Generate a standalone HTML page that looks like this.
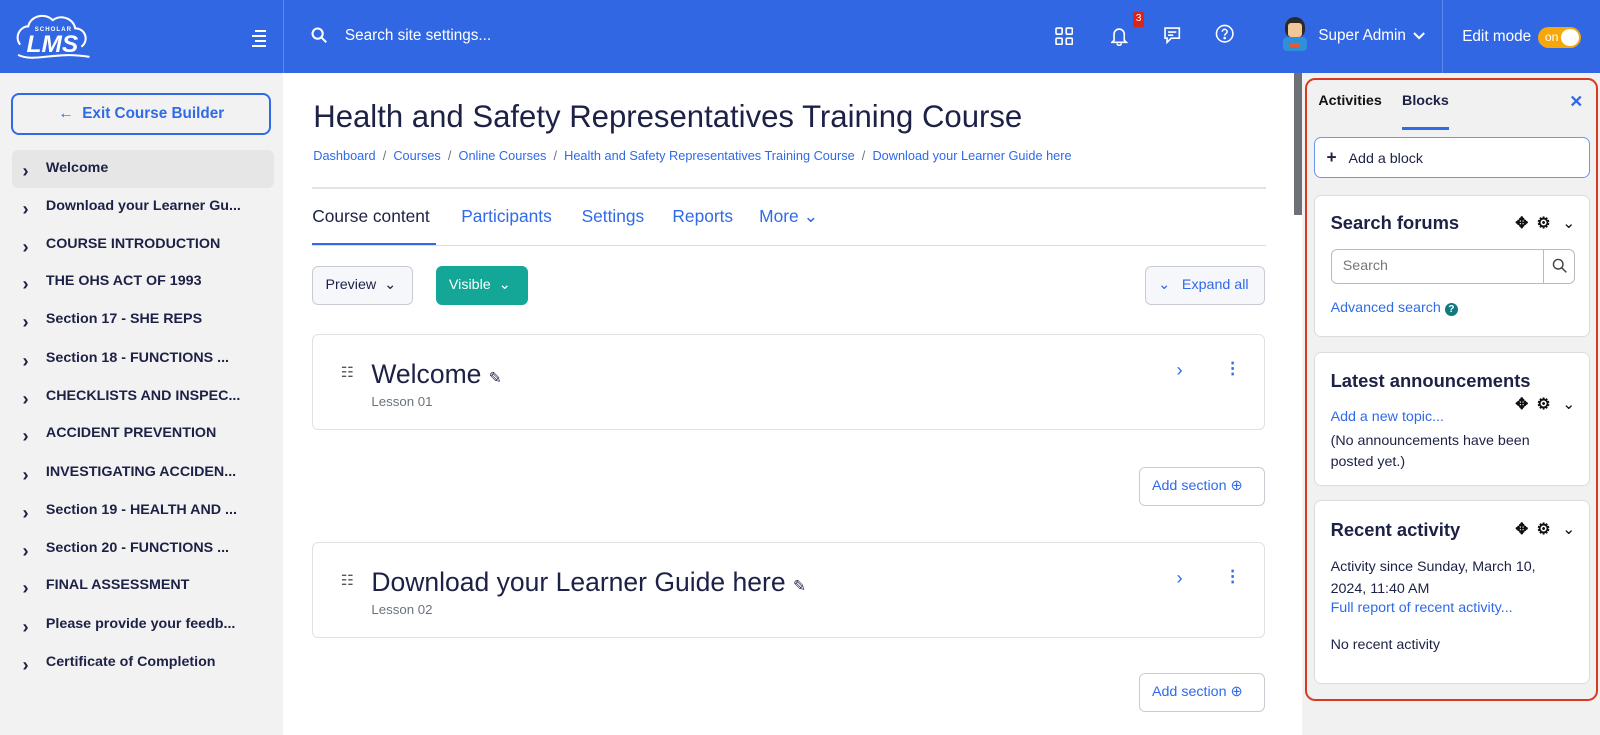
<!DOCTYPE html>
<html><head><meta charset="utf-8"><style>
*{box-sizing:border-box;margin:0;padding:0}
html,body{width:1600px;height:735px;overflow:hidden}
body{font-family:"Liberation Sans",sans-serif;background:#fff;color:#1d2145;position:relative}
#w{position:absolute;left:0;top:0;width:1568px;height:721px;zoom:1.0204}
.hdr{position:absolute;left:0;top:0;width:1568px;height:72px;background:#3167e3;color:#fff}
.vl{position:absolute;top:0;width:1px;height:72px;background:#5c87ec}
.side{position:absolute;left:0;top:72px;width:277px;height:663px;background:#f2f2f2}
.exit{position:absolute;left:11px;top:19px;width:255px;height:41px;border:2px solid #2f6ae8;border-radius:8px;color:#2f6ae8;font-weight:bold;font-size:15px;text-align:center;line-height:37px}
.it{position:absolute;left:12px;width:257px;height:37px;font-size:14px;font-weight:bold;line-height:37px;padding-left:33px;color:#1d2145}
.it:before{content:"›";position:absolute;left:10px;top:2px;font-size:18px;font-weight:bold}
.it.a{background:#e6e6e6;border-radius:6px}
.main{position:absolute;left:278px;top:72px;width:990px}
a,.lk{color:#2f6ae8;text-decoration:none}
.btn{position:absolute;border:1px solid #c8ccd2;border-radius:6px;background:#f5f7fa;font-size:14px;height:38px;line-height:36px;padding:0 12px}
.card{position:absolute;left:28px;width:934px;height:94px;border:1px solid #dee2e6;border-radius:6px;background:#fff}
.card h2{position:absolute;left:57px;top:24px;font-size:26px;font-weight:normal;color:#1d2145}
.card .ls{position:absolute;left:57px;top:58px;font-size:13px;color:#6a737d}
.drawer{position:absolute;left:1276px;top:72px;width:292px;height:663px;background:#f1f1f1}
.red{position:absolute;left:1279px;top:76px;width:287px;height:611px;border:2px solid #d9391f;border-radius:10px}
.blk{position:absolute;left:1288px;width:270px;background:#fff;border:1px solid #dcdcdc;border-radius:7px}
.blk h3{position:absolute;left:15px;font-size:18px;font-weight:bold;color:#1d2145}
.ic{position:absolute;left:196px;width:60px;height:16px;font-size:15px;font-weight:bold;color:#111}
.ic span{position:absolute;top:0}
.t{font-size:14px;position:absolute;left:15px}
</style></head><body><div id="w">
<div class="hdr">
 <div style="position:absolute;left:14px;top:10px;width:75px;height:52px">
  <svg width="75" height="52" viewBox="0 0 75 52"><path d="M6 34 C0 26 6 16 14 16 C16 6 30 2 38 10 C46 4 58 8 60 18 C70 18 74 30 66 36" fill="none" stroke="#fff" stroke-width="2"/><path d="M4 44 C20 52 40 40 74 46" fill="none" stroke="#fff" stroke-width="2"/></svg>
  <div style="position:absolute;left:20px;top:15px;font-size:6px;font-weight:bold;letter-spacing:1px">SCHOLAR</div>
  <div style="position:absolute;left:12px;top:20px;font-size:24px;font-weight:bold;font-style:italic">LMS</div>
 </div>
 <div style="position:absolute;left:247px;top:29px;width:14px"><div style="height:2px;background:#fff;margin:0 0 3px 3px"></div><div style="height:2px;background:#fff;margin:0 0 3px 0"></div><div style="height:2px;background:#fff;margin:0 0 3px 3px"></div><div style="height:2px;background:#fff;margin-left:0"></div></div>
 <div class="vl" style="left:277px"></div>
 <svg style="position:absolute;left:305px;top:26px" width="16" height="16" viewBox="0 0 16 16"><circle cx="6.5" cy="6.5" r="5" fill="none" stroke="#fff" stroke-width="2"/><path d="M10 10l5 5" stroke="#fff" stroke-width="2"/></svg>
 <div style="position:absolute;left:338px;top:26px;font-size:15px">Search site settings...</div>
 <svg style="position:absolute;left:1034px;top:26px" width="18" height="18" viewBox="0 0 18 18" fill="none" stroke="#fff" stroke-width="1.6"><rect x="1" y="1" width="6" height="6" rx="1"/><rect x="11" y="1" width="6" height="6" rx="1"/><rect x="1" y="11" width="6" height="6" rx="1"/><rect x="11" y="11" width="6" height="6" rx="1"/></svg>
 <svg style="position:absolute;left:1089px;top:25px" width="16" height="20" viewBox="0 0 16 20" fill="none" stroke="#fff" stroke-width="1.6"><path d="M3 14V8a5 5 0 0110 0v6l2 2H1z"/><path d="M6 17a2 2 0 004 0"/></svg>
 <div style="position:absolute;left:1110px;top:12px;background:#d9251d;font-size:10px;padding:0 3px;line-height:14px">3</div>
 <svg style="position:absolute;left:1140px;top:25px" width="18" height="18" viewBox="0 0 18 18" fill="none" stroke="#fff" stroke-width="1.6"><path d="M2 2h14v10H8l-4 4v-4H2z"/><path d="M5 6h8M5 9h5"/></svg>
 <svg style="position:absolute;left:1191px;top:24px" width="19" height="19" viewBox="0 0 20 20" fill="none" stroke="#fff" stroke-width="1.6"><circle cx="10" cy="10" r="8.5"/><path d="M7.5 8a2.5 2.5 0 115 0c0 2-2.5 2-2.5 4"/><circle cx="10" cy="14.5" r=".6" fill="#fff"/></svg>
 <div style="position:absolute;left:1253px;top:17px;width:32px;height:36px">
  <div style="position:absolute;left:6px;top:0;width:20px;height:20px;border-radius:50% 50% 40% 40%;background:#2a2a2a"></div>
  <div style="position:absolute;left:9px;top:6px;width:14px;height:13px;background:#f1c79a;border-radius:3px"></div>
  <div style="position:absolute;left:4px;top:19px;width:24px;height:14px;background:#2f8fd8;border-radius:4px"></div>
  <div style="position:absolute;left:11px;top:25px;width:10px;height:4px;background:#e53"></div>
 </div>
 <div style="position:absolute;left:1292px;top:26px;font-size:15px">Super Admin</div>
 <svg style="position:absolute;left:1385px;top:31px" width="12" height="8" viewBox="0 0 12 8"><path d="M1 1l5 5 5-5" fill="none" stroke="#fff" stroke-width="2"/></svg>
 <div class="vl" style="left:1413px"></div>
 <div style="position:absolute;left:1433px;top:27px;font-size:15px">Edit mode</div>
 <div style="position:absolute;left:1507px;top:26px;width:42px;height:21px;border-radius:11px;background:#f5a70c"><span style="position:absolute;left:7px;top:3px;font-size:12px">on</span><div style="position:absolute;right:2px;top:2px;width:17px;height:17px;border-radius:50%;background:#fff"></div></div>
</div>

<div class="side">
 <div class="exit">← &nbsp;Exit Course Builder</div>
 <div class="it a" style="top:75px">Welcome</div>
 <div class="it" style="top:112px">Download your Learner Gu...</div>
 <div class="it" style="top:149px">COURSE INTRODUCTION</div>
 <div class="it" style="top:186px">THE OHS ACT OF 1993</div>
 <div class="it" style="top:223px">Section 17 - SHE REPS</div>
 <div class="it" style="top:261px">Section 18 - FUNCTIONS ...</div>
 <div class="it" style="top:298px">CHECKLISTS AND INSPEC...</div>
 <div class="it" style="top:335px">ACCIDENT PREVENTION</div>
 <div class="it" style="top:373px">INVESTIGATING ACCIDEN...</div>
 <div class="it" style="top:410px">Section 19 - HEALTH AND ...</div>
 <div class="it" style="top:447px">Section 20 - FUNCTIONS ...</div>
 <div class="it" style="top:484px">FINAL ASSESSMENT</div>
 <div class="it" style="top:522px">Please provide your feedb...</div>
 <div class="it" style="top:559px">Certificate of Completion</div>
</div>

<div class="main">
 <div style="position:absolute;left:29px;top:25px;font-size:30.5px;color:#1d2145">Health and Safety Representatives Training Course</div>
 <div style="position:absolute;left:29px;top:73px;font-size:12.5px;color:#6a737d"><a>Dashboard</a> &nbsp;/&nbsp; <a>Courses</a> &nbsp;/&nbsp; <a>Online Courses</a> &nbsp;/&nbsp; <a>Health and Safety Representatives Training Course</a> &nbsp;/&nbsp; <a>Download your Learner Guide here</a></div>
 <div style="position:absolute;left:28px;top:111px;width:935px;height:2px;background:#e3e3e3"></div>
 <div style="position:absolute;left:28px;top:130px;font-size:17px;color:#1d2145">Course content</div>
 <div style="position:absolute;left:174px;top:130px;font-size:17px" class="lk">Participants</div>
 <div style="position:absolute;left:292px;top:130px;font-size:17px" class="lk">Settings</div>
 <div style="position:absolute;left:381px;top:130px;font-size:17px" class="lk">Reports</div>
 <div style="position:absolute;left:466px;top:130px;font-size:17px" class="lk">More ⌄</div>
 <div style="position:absolute;left:28px;top:166px;width:121px;height:3px;background:#2f6ae8"></div>
 <div style="position:absolute;left:28px;top:168px;width:935px;height:1px;background:#dcdcdc"></div>
 <div class="btn" style="left:28px;top:189px;width:99px;color:#1d2145">Preview &nbsp;⌄</div>
 <div class="btn" style="left:149px;top:189px;width:90px;background:#14a697;border-color:#14a697;color:#fff">Visible &nbsp;⌄</div>
 <div class="btn lk" style="left:844px;top:189px;width:118px">⌄ &nbsp; Expand all</div>
 <div class="card" style="top:255px">
  <div style="position:absolute;left:27px;top:30px;font-size:14px;color:#555">☷</div>
  <h2>Welcome <span style="font-size:15px">✎</span></h2><div class="ls">Lesson 01</div>
  <div class="lk" style="position:absolute;left:846px;top:24px;font-size:18px">›</div>
  <div class="lk" style="position:absolute;left:893px;top:24px;font-size:16px;font-weight:bold">⋮</div>
 </div>
 <div class="btn lk" style="left:838px;top:386px;width:124px;background:#fff">Add section ⊕</div>
 <div class="card" style="top:459px">
  <div style="position:absolute;left:27px;top:30px;font-size:14px;color:#555">☷</div>
  <h2>Download your Learner Guide here <span style="font-size:15px">✎</span></h2><div class="ls">Lesson 02</div>
  <div class="lk" style="position:absolute;left:846px;top:24px;font-size:18px">›</div>
  <div class="lk" style="position:absolute;left:893px;top:24px;font-size:16px;font-weight:bold">⋮</div>
 </div>
 <div class="btn lk" style="left:838px;top:588px;width:124px;background:#fff">Add section ⊕</div>
</div>
<div style="position:absolute;left:1268px;top:72px;width:8px;height:139px;background:#6c7178"></div>

<div class="drawer"></div>
<div class="red"></div>
<div style="position:absolute;left:1292px;top:91px;font-size:14px;font-weight:bold;color:#111">Activities</div>
<div style="position:absolute;left:1374px;top:91px;font-size:14px;font-weight:bold">Blocks</div>
<div style="position:absolute;left:1374px;top:124px;width:46px;height:3px;background:#2f6ae8"></div>
<div style="position:absolute;left:1538px;top:90px;font-size:16px;font-weight:bold;color:#2f6ae8">✕</div>
<div style="position:absolute;left:1288px;top:134px;width:270px;height:40px;border:1px solid #6c95ef;border-radius:7px;background:#fff;font-size:14px;line-height:38px;padding-left:11px"><b style="font-size:17px">+</b> &nbsp;&nbsp;Add a block</div>

<div class="blk" style="top:191px;height:139px">
 <h3 style="top:16px">Search forums</h3>
 <div class="ic" style="top:18px"><span style="left:0">✥</span><span style="left:21px">⚙</span><span style="left:46px;font-weight:normal">⌄</span></div>
 <div style="position:absolute;left:15px;top:52px;width:240px;height:34px;border:1px solid #b8bcc2;border-radius:6px;font-size:14px;color:#777;line-height:32px;padding-left:11px">Search
  <div style="position:absolute;right:0;top:0;width:31px;height:32px;border-left:1px solid #b8bcc2"><svg style="position:absolute;left:8px;top:8px" width="15" height="15" viewBox="0 0 16 16"><circle cx="6.5" cy="6.5" r="5" fill="none" stroke="#444" stroke-width="1.5"/><path d="M10 10l5 5" stroke="#444" stroke-width="1.5"/></svg></div></div>
 <div class="t lk" style="top:102px">Advanced search <span style="display:inline-block;width:13px;height:13px;border-radius:50%;background:#0f7a80;color:#fff;font-size:10px;text-align:center;line-height:13px;font-weight:bold">?</span></div>
</div>
<div class="blk" style="top:345px;height:131px">
 <h3 style="top:17px">Latest announcements</h3>
 <div class="ic" style="top:41px"><span style="left:0">✥</span><span style="left:21px">⚙</span><span style="left:46px;font-weight:normal">⌄</span></div>
 <div class="t lk" style="top:55px">Add a new topic...</div>
 <div class="t" style="top:76px;line-height:21px">(No announcements have been<br>posted yet.)</div>
</div>
<div class="blk" style="top:490px;height:180px">
 <h3 style="top:18px">Recent activity</h3>
 <div class="ic" style="top:19px"><span style="left:0">✥</span><span style="left:21px">⚙</span><span style="left:46px;font-weight:normal">⌄</span></div>
 <div class="t" style="top:55px;line-height:21px">Activity since Sunday, March 10,<br>2024, 11:40 AM</div>
 <div class="t lk" style="top:97px">Full report of recent activity...</div>
 <div class="t" style="top:133px">No recent activity</div>
</div>
</div></body></html>
